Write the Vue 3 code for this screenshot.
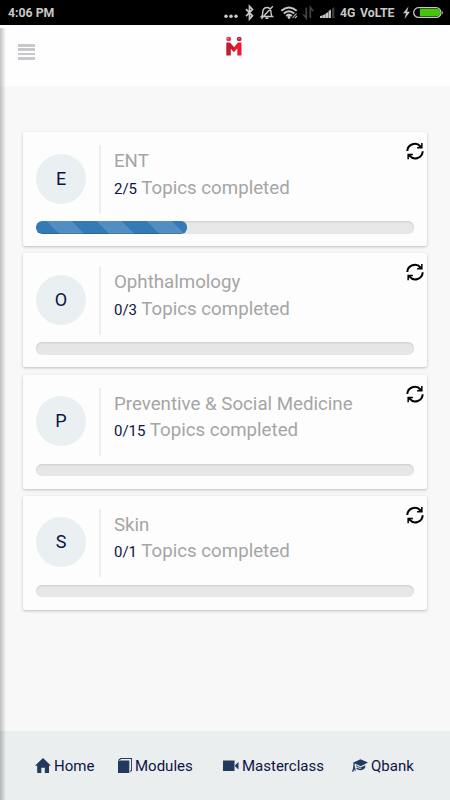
<script setup>
import { ref } from "vue";

const subjects = ref([
    { name: "ENT", done: 2, total: 5 },
    { name: "Ophthalmology", done: 0, total: 3 },
    { name: "Preventive & Social Medicine", done: 0, total: 15 },
    { name: "Skin", done: 0, total: 1 },
]);

function resetSubject(subject) {
    subject.done = 0;
}
</script>

<template>
    <div class="screen">
        <div class="status-bar">
            <span class="time">4:06 PM</span>
            <svg class="status-icons" width="117" height="25" viewBox="0 0 117 25">
                <g fill="#c8c8c8">
                    <circle cx="3" cy="16.2" r="1.8" />
                    <circle cx="8" cy="16.2" r="1.8" />
                    <circle cx="13" cy="16.2" r="1.8" />
                </g>
                <path d="M23 9.2l6.500 6.600-3 3.200V6.400l3 3.100-6.500 6.600" fill="none" stroke="#c8c8c8" stroke-width="1.7" />
                <path d="M38.500 16.500c1.600-1.200 1-3.500 1.400-5.400.5-2.300 2-3.600 4-3.600s3.500 1.300 4 3.600c.4 1.900-.2 4.200 1.400 5.400zM42.500 18.300h2.800M49.800 6.200l-11.500 12.600" fill="none" stroke="#c8c8c8" stroke-width="1.4" />
                <g fill="none" stroke="#c8c8c8" stroke-width="2">
                    <path d="M58.300 10.800q7.700-6.500 15.400 0M60.800 13.500q5.200-4.500 10.400 0M63.200 16q2.800-2.200 5.600 0" />
                    <path d="M69.500 18l4-4.500M72 18.200l2-2.300" stroke-width="1.1" />
                </g>
                <circle cx="66" cy="17.500" r="1.4" fill="#c8c8c8" />
                <path d="M83.300 7.500V18l-3-3.500M87.300 18V7.500l3 3.500" fill="none" stroke="#444" stroke-width="1.7" />
                <path d="M97 18v-1.700l2.500-1V18zM99.800 18v-2.800l2.500-1.300V18zM102.600 18v-4.500l2.700-1.500v6z" fill="#c8c8c8" />
                <path d="M105.600 18v-7l2.300-1.500V18z" fill="#c8c8c8" />
                <path d="M109 18V8.500l2.500-1.500v11z" fill="#3b3b3b" />
            </svg>
            <span class="network">4G</span>
            <span class="network volte">VoLTE</span>
            <svg class="battery" width="42" height="25" viewBox="0 0 42 25">
                <path d="M6.500 6.500L1 13.200h3L2.500 19 8 11.800H5z" fill="#c8c8c8" />
                <rect x="11.700" y="7.700" width="27.300" height="9.700" rx="4.800" fill="#000" stroke="#c8c8c8" stroke-width="1.3" />
                <path d="M18 8.800h16.500a3.700 3.700 0 0 1 0 7.500H18z" fill="#46c40b" />
                <path d="M40.200 10.500q1.500 2 0 4z" fill="#c8c8c8" />
            </svg>
        </div>

        <header class="header">
            <button class="menu">
                <span v-for="n in 4" :key="n"></span>
            </button>
            <svg class="logo" width="16" height="20" viewBox="0 0 16 20">
                <ellipse cx="2.700" cy="3" rx="2.500" ry="2.200" fill="#df3942" />
                <ellipse cx="13.200" cy="3" rx="2.500" ry="2.200" fill="#a62b45" />
                <path d="M1 2.600h2M12.300 2.600h2" stroke="#f3b0b6" stroke-width=".6" />
                <path d="M3.500 6.500L8 11.300l4-4.800h3.500v13h-4.200v-7L8 16l-4-4z" fill="#ed1c2b" />
                <path d="M.3 6.500h3.500L8 11.300V16l-3.200-3.500v7H.3z" fill="#c21b30" />
            </svg>
        </header>

        <main class="content">
            <div class="card" v-for="subject in subjects" :key="subject.name">
                <div class="card-body">
                    <div class="avatar">{{ subject.name[0] }}</div>
                    <div class="details">
                        <div class="name">{{ subject.name }}</div>
                        <div class="topics">
                            <span class="count">{{ subject.done }}/{{ subject.total }}</span>
                            Topics completed
                        </div>
                    </div>
                    <button class="refresh" @click="resetSubject(subject)">
                        <svg width="18" height="18" viewBox="0 0 18 18">
                            <path d="M1.300 9a7.500 7.500 0 0 1 13.200-4.500M16.700 9.200a7.500 7.500 0 0 1-13.200 4.500" fill="none" stroke="#000" stroke-width="2" />
                            <path d="M16.600 1v5.500h-5.500V5l2.700-.2 1.300-1.300V1zM1.400 17.200v-5.500h5.500v1.500l-2.700.2-1.300 1.300v2.500z" />
                        </svg>
                    </button>
                </div>
                <div class="progress">
                    <div
                        class="progress-bar"
                        :style="{ width: (subject.done / subject.total) * 100 + '%' }"
                    ></div>
                </div>
            </div>
        </main>

        <nav class="tabs">
            <a class="tab home">
                <svg width="16" height="16" viewBox="0 0 16 16">
                    <path d="M8 0L16 7.700h-2V15H9.800V9.700H6.300V15H2.200V7.700H0z" />
                </svg>
                Home
            </a>
            <a class="tab modules">
                <svg width="15" height="16" viewBox="0 0 15 16">
                    <path d="M0 2.500h11.300V15H0zM0 2L2.500 0H14v12.700l-1.800 1.500v-1.500l.9-.7V1H3L2 2z" />
                </svg>
                Modules
            </a>
            <a class="tab masterclass">
                <svg width="16" height="16" viewBox="0 0 16 16">
                    <path d="M0 2.500h11.500V13H0zM12 7.300L15.500 4v7.500L12 8.300z" />
                </svg>
                Masterclass
            </a>
            <a class="tab qbank">
                <svg width="16" height="16" viewBox="0 0 16 16">
                    <path d="M1 4.700L8.500 1.200 16 4.400 8.800 8.200zM4 7.200l4.800 2.300 4.400-2.300v2.500q-1.600 2.300-4.700 2.500-2.700-.1-4.300-1.800l1-.9q1.400 1.300 3.400 1.200 2-.1 3.200-1.200l-2 1.200L4 8.200z" />
                    <path d="M2.200 4.700l-.5 5.500-1 3.500M2.200 8.700l1.100 4" fill="none" stroke="#223b5c" stroke-width="1.3" />
                </svg>
                Qbank
            </a>
        </nav>
        <div class="edge-shadow"></div>
    </div>
</template>

<style>
body {
    margin: 0;
}
</style>

<style scoped>
.screen {
    position: relative;
    display: flex;
    flex-direction: column;
    width: 450px;
    height: 800px;
    overflow: hidden;
    background: #f8f8f8;
    font-family: Roboto, "Liberation Sans", sans-serif;
}

button {
    padding: 0;
    border: 0;
    background: none;
}

.status-bar {
    display: flex;
    align-items: center;
    height: 25px;
    padding-left: 8px;
    background: #000;
    color: #c8c8c8;
    font-size: 12.3px;
    font-weight: 700;
}

.time {
    width: 215px;
}

.network {
    width: 20px;
}

.volte {
    width: 42px;
}

.header {
    display: flex;
    align-items: flex-start;
    height: 61px;
    padding-left: 18px;
    background: #fefdff;
}

.menu {
    display: flex;
    flex-direction: column;
    gap: 1.5px;
    width: 17px;
    margin-top: 19px;
}

.menu span {
    height: 2.8px;
    background: #c8c8c8;
}

.logo {
    margin: 11px 0 0 191px;
}

.content {
    display: flex;
    flex: 1;
    flex-direction: column;
    gap: 7.3px;
    padding: 46px 23px 0;
}

.card {
    box-sizing: border-box;
    height: 114px;
    padding: 13px 13px 0;
    border-radius: 2px;
    background: #fdfdfd;
    box-shadow: 0 1px 3px rgba(0, 0, 0, 0.24);
}

.card-body {
    display: flex;
    align-items: flex-start;
    height: 68px;
}

.avatar {
    width: 50px;
    height: 50px;
    margin: 8.6px 13px 0 0;
    border-radius: 50%;
    background: #eaf0f1;
    color: #0c1444;
    font-size: 18px;
    line-height: 50px;
    text-align: center;
}

.details {
    flex: 1;
    height: 68.5px;
    padding-left: 13px;
    border-left: 2px solid #eaeff1;
    color: #a5a5a5;
    font-size: 18.7px;
    line-height: 26.5px;
    white-space: nowrap;
}

.name {
    margin-top: 3px;
}

.count {
    color: #0c1444;
    font-size: 15px;
}

.refresh {
    height: 18px;
    margin: -3px -10px 0 0;
}

.refresh svg {
    display: block;
}

.progress {
    height: 12.5px;
    margin-top: 8px;
    overflow: hidden;
    border-radius: 6px;
    background: #e7e7e7;
    box-shadow: inset 0 1px 2px rgba(0, 0, 0, 0.12);
}

.progress-bar {
    height: 100%;
    border-radius: 6px;
    background-color: #337ab7;
    background-image: linear-gradient(
        45deg,
        rgba(255, 255, 255, 0.15) 25%,
        transparent 25%,
        transparent 50%,
        rgba(255, 255, 255, 0.15) 50%,
        rgba(255, 255, 255, 0.15) 75%,
        transparent 75%
    );
    background-position: 11px 0;
    background-size: 50px 50px;
    box-shadow: inset 0 -1px 0 rgba(0, 0, 0, 0.15);
}

.tabs {
    display: flex;
    align-items: center;
    height: 69px;
    padding-left: 35px;
    background: #eaeeef;
    color: #0c1444;
    font-size: 15px;
}

.tab {
    display: flex;
    align-items: center;
    gap: 3px;
}

.tab svg {
    fill: #223b5c;
}

.home {
    width: 83px;
}

.modules {
    width: 105px;
}

.modules svg {
    margin-right: -1px;
}

.masterclass {
    width: 129px;
}

.edge-shadow {
    position: absolute;
    top: 28px;
    bottom: 0;
    left: 0;
    width: 6px;
    background: linear-gradient(to right, rgba(0, 0, 0, 0.24), rgba(0, 0, 0, 0));
}
</style>
